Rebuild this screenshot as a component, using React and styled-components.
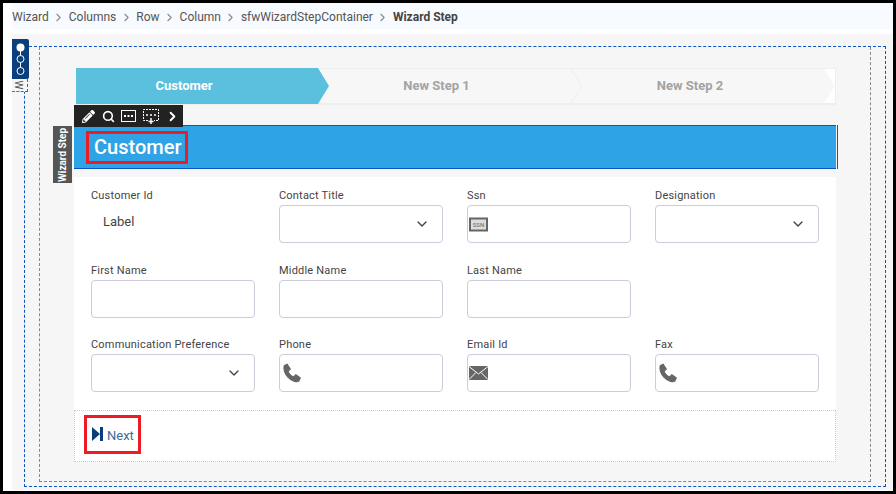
import React from "react";
import styled, { createGlobalStyle } from "styled-components";
import { FaPencilAlt } from "react-icons/fa";
import { ChevronDown, ChevronRight, Search } from "lucide-react";

const Global = createGlobalStyle`
  html, body {
    margin: 0;
    background: #fff;
  }
  body {
    font-family: Roboto, "Liberation Sans", sans-serif;
    color: #333;
  }
`;

const Frame = styled("div")`
  box-sizing: border-box;
  width: 896px;
  height: 494px;
  border: 3px solid #000;
  padding: 0 0 0 9px;
  overflow: hidden;
`;

const Breadcrumb = styled("nav")`
  display: flex;
  align-items: center;
  height: 26px;
  padding-top: 2px;
  box-sizing: border-box;
  background: #f7faff;
  font-size: 12px;
  color: #555;
`;

const Crumb = styled("span")`
  font-weight: ${(p) => (p.$current ? 700 : 400)};
  color: ${(p) => (p.$current ? "#444" : "#555")};
`;

const Sep = styled(ChevronRight)`
  width: 13px;
  height: 13px;
  margin: 0 3.5px;
  color: #888;
`;

const Canvas = styled("main")`
  position: relative;
  margin-top: 5px;
  height: 456px;
  background: #f6f6f6;
  padding: 12px 7px 4px 12px;
  box-sizing: border-box;
`;

const OuterDash = styled("div")`
  box-sizing: border-box;
  height: 441px;
  border: 1px dashed #0a55c4;
  padding: 0 14px 4px 14px;
`;

const InnerDash = styled("div")`
  box-sizing: border-box;
  height: 100%;
  border: 1px dashed #888;
  border-top: 0;
  padding: 21px 34px 19px 34px;
`;

const NavTab = styled("div")`
  position: absolute;
  left: 0;
  top: 5px;
  width: 17px;
  height: 40px;
  background: #0a3f7c;
  border-radius: 0 2px 2px 0;
`;

const NavLabel = styled("div")`
  position: absolute;
  left: 0;
  top: 45px;
  width: 15px;
  height: 12px;
  border: 1px dashed #666;
  border-left: 0;
  border-top: 0;
  font-size: 10px;
  line-height: 12px;
  color: #555;
  overflow: hidden;
  background: #f6f6f6;
`;

const NavLetter = styled("span")`
  display: block;
  width: 12px;
  text-align: center;
  transform: rotate(90deg);
`;

const Steps = styled("div")`
  display: flex;
  height: 37px;
  margin-left: 2px;
  background: #f7f7f7;
  border: 1px solid #eee;
  border-width: 1px 1px 2px 0;
  box-sizing: border-box;
`;

const Step = styled("div")`
  position: relative;
  box-sizing: border-box;
  flex: 0 0 ${(p) => p.$width}px;
  display: flex;
  align-items: center;
  justify-content: center;
  padding: 0 ${(p) => p.$shift}px 2px 0;
  font-size: 13px;
  font-weight: 700;
  color: ${(p) => (p.$active ? "#fff" : "#a3a3a3")};
  background: ${(p) => (p.$active ? "#5bc0de" : "transparent")};
  margin-top: ${(p) => (p.$active ? "-1px" : "0")};
  margin-bottom: ${(p) => (p.$active ? "-1px" : "0")};
`;

const StepTip = styled("svg")`
  position: absolute;
  top: 0;
  left: 100%;
  height: 100%;
  width: 11px;
  overflow: visible;
`;

const Card = styled("section")`
  position: relative;
  margin-top: 20px;
  background: #fff;
`;

const Toolbar = styled("div")`
  position: absolute;
  left: 0;
  top: -20px;
  width: 109px;
  height: 22px;
  background: #222;
  display: flex;
  align-items: center;
  gap: 6.5px;
  padding-left: 8px;
  box-sizing: border-box;
  color: #fff;
  z-index: 2;
`;

const ToolIcon = styled("svg")`
  display: block;
  flex: none;
`;

const SideTab = styled("div")`
  position: absolute;
  left: -21px;
  top: 1px;
  width: 19px;
  height: 57px;
  background: #555;
  color: #fff;
  font-size: 10px;
  font-weight: 700;
  writing-mode: vertical-rl;
  transform: rotate(180deg);
  display: flex;
  align-items: center;
  justify-content: center;
  z-index: 2;
`;

const Heading = styled("div")`
  position: relative;
  box-sizing: border-box;
  height: 44px;
  background: #2ea3e6;
  border: solid #0a55c4;
  border-width: 1px 0;
  display: flex;
  align-items: center;
  padding-left: 12px;
  &::after {
    content: "";
    position: absolute;
    top: -1px;
    bottom: -1px;
    right: -2px;
    width: 1px;
    background: #0a55c4;
  }
`;

const Title = styled("h2")`
  margin: 0;
  box-sizing: border-box;
  height: 33px;
  padding: 0 4px 0 5px;
  border: 3px solid #ed1c24;
  font-size: 20px;
  line-height: 27px;
  font-weight: 500;
  color: #fff;
`;

const HeadingGap = styled("div")`
  height: 8px;
  background: #f6f6f6;
`;

const Form = styled("div")`
  display: grid;
  grid-template-columns: repeat(4, 164px);
  column-gap: 24px;
  row-gap: 20.5px;
  padding: 12px 17px 18px 17px;
`;

const Field = styled("div")`
  display: flex;
  flex-direction: column;
`;

const Label = styled("label")`
  height: 16px;
  line-height: 14px;
  font-size: 11px;
  letter-spacing: 0.2px;
  color: #444;
`;

const Control = styled("div")`
  box-sizing: border-box;
  height: 38px;
  border: 1px solid #ccd;
  border-radius: 4px;
  display: flex;
  align-items: center;
  justify-content: ${(p) => (p.$select ? "flex-end" : "flex-start")};
  padding: ${(p) => (p.$select ? "0 12px 0 0" : "0 0 0 1px")};
  color: #555;
`;

const StaticText = styled("div")`
  height: 32px;
  display: flex;
  align-items: center;
  padding-left: 12px;
  font-size: 13px;
  color: #444;
`;

const Footer = styled("div")`
  box-sizing: border-box;
  height: 52px;
  border: 1px dotted #ccc;
  padding: 4px 0 0 9px;
`;

const NextButton = styled("button")`
  box-sizing: border-box;
  height: 39px;
  width: 57px;
  background: #fff;
  border: 3px solid #ed1c24;
  display: flex;
  align-items: center;
  gap: 4px;
  padding: 1px 0 0 5px;
  font-family: inherit;
  font-size: 13px;
  color: #3f6a94;
`;

const Mark = styled("svg")`
  display: block;
  flex: none;
`;

const NextMark = styled(Mark)`
  margin-top: -3px;
`;

const PhoneMark = styled(Mark)`
  margin-left: 1px;
`;

const crumbs = ["Wizard", "Columns", "Row", "Column", "sfwWizardStepContainer"];

const SsnIcon = () => (
  <Mark width="19" height="15" viewBox="0 0 19 15">
    <rect x="1" y="1.500" width="17" height="12" fill="#ddd" stroke="#666" strokeWidth="2" />
    <text x="9.500" y="10" fontSize="6" textAnchor="middle" fill="#666" fontFamily="Roboto">SSN</text>
  </Mark>
);

const MailIcon = () => (
  <Mark width="19" height="14" viewBox="0 0 19 14">
    <rect width="19" height="14" fill="#666" />
    <path d="M0 .5 9.500 8 19 .5M0 13.500l7-7M19 13.500l-7-7" fill="none" stroke="#fff" strokeWidth="1" />
  </Mark>
);

const PhoneIcon = () => (
  <PhoneMark width="20" height="20" viewBox="0 0 18 18">
    <path
      d="M2 2.500 4.500 1 7.500 5.500 5.500 7.500C6.500 10 8.500 12 10.500 12.500L12.500 10.500 16.500 13.500 15 16.500C13 17.500 9 16.500 5.500 13 2.500 10 1 5.500 2 2.500Z"
      fill="#666"
      stroke="#666"
      strokeLinejoin="round"
    />
  </PhoneMark>
);

const Arrow = () => <ChevronDown size={16} strokeWidth={2} color="#444" />;

const rows = [
  [
    { label: "Customer Id", kind: "text", value: "Label" },
    { label: "Contact Title", kind: "select" },
    { label: "Ssn", kind: "ssn" },
    { label: "Designation", kind: "select" },
  ],
  [
    { label: "First Name" },
    { label: "Middle Name" },
    { label: "Last Name" },
    null,
  ],
  [
    { label: "Communication Preference", kind: "select" },
    { label: "Phone", kind: "phone" },
    { label: "Email Id", kind: "mail" },
    { label: "Fax", kind: "phone" },
  ],
];

const FieldBody = ({ field }) => {
  if (field.kind === "text") return <StaticText>{field.value}</StaticText>;
  if (field.kind === "select") return <Control $select><Arrow /></Control>;
  if (field.kind === "ssn") return <Control><SsnIcon /></Control>;
  if (field.kind === "phone") return <Control><PhoneIcon /></Control>;
  if (field.kind === "mail") return <Control><MailIcon /></Control>;
  return <Control />;
};

export default function App() {
  return (
    <>
      <Global />
      <Frame>
        <Breadcrumb>
          {crumbs.map((c) => (
            <React.Fragment key={c}>
              <Crumb>{c}</Crumb>
              <Sep />
            </React.Fragment>
          ))}
          <Crumb $current>Wizard Step</Crumb>
        </Breadcrumb>
        <Canvas>
          <NavTab>
            <svg width="17" height="40" viewBox="0 0 17 40">
              <path d="M8.500 8v24" stroke="#fff" strokeWidth="1" />
              <circle cx="8.500" cy="8.500" r="4" fill="#fff" />
              <circle cx="8.500" cy="20" r="3.500" fill="#0a3f7c" stroke="#fff" />
              <circle cx="8.500" cy="32" r="3.500" fill="#0a3f7c" stroke="#fff" />
            </svg>
          </NavTab>
          <NavLabel><NavLetter>W</NavLetter></NavLabel>
          <OuterDash>
            <InnerDash>
              <Steps>
                <Step $active $width={242} $shift={26}>
                  Customer
                  <StepTip viewBox="0 0 11 37" preserveAspectRatio="none">
                    <path d="M0 0 11 18.500 0 37Z" fill="#5bc0de" />
                  </StepTip>
                </Step>
                <Step $width={253} $shift={16}>
                  New Step 1
                  <StepTip viewBox="0 0 11 37" preserveAspectRatio="none">
                    <path d="M0 0 11 18.500 0 37" fill="none" stroke="#ececec" />
                  </StepTip>
                </Step>
                <Step $width={253} $shift={15}>
                  New Step 2
                  <StepTip viewBox="0 0 11 37" preserveAspectRatio="none">
                    <path d="M0 0H11V37H0L11 18.500Z" fill="#fff" />
                  </StepTip>
                </Step>
              </Steps>
              <Card>
                <Toolbar>
                  <FaPencilAlt size={13} />
                  <Search size={13} strokeWidth={3} />
                  <ToolIcon width="15" height="12" viewBox="0 0 15 12">
                    <rect x=".5" y=".5" width="14" height="11" fill="none" stroke="#fff" />
                    <path d="M3 6h2M6.500 6h2M10 6h2" stroke="#fff" strokeWidth="2" />
                  </ToolIcon>
                  <ToolIcon width="16" height="15" viewBox="0 0 16 15">
                    <path d="M5 11.500H.5V.5h15v11H11" fill="none" stroke="#fff" strokeDasharray="2 1" />
                    <path d="M3 6h2M7 6h2M11 6h2M8 9v6M5.500 12.500h5" stroke="#fff" strokeWidth="1.500" />
                  </ToolIcon>
                  <ChevronRight size={15} strokeWidth={3} />
                </Toolbar>
                <SideTab>Wizard Step</SideTab>
                <Heading>
                  <Title>Customer</Title>
                </Heading>
                <HeadingGap />
                <Form>
                  {rows.flat().map((field, i) =>
                    field ? (
                      <Field key={field.label}>
                        <Label>{field.label}</Label>
                        <FieldBody field={field} />
                      </Field>
                    ) : (
                      <div key={i} />
                    )
                  )}
                </Form>
                <Footer>
                  <NextButton>
                    <NextMark width="11" height="14" viewBox="0 0 11 14">
                      <path d="M0 0 8 7 0 14ZM8 0h3v14H8Z" fill="#0a3f7c" />
                    </NextMark>
                    Next
                  </NextButton>
                </Footer>
              </Card>
            </InnerDash>
          </OuterDash>
        </Canvas>
      </Frame>
    </>
  );
}
